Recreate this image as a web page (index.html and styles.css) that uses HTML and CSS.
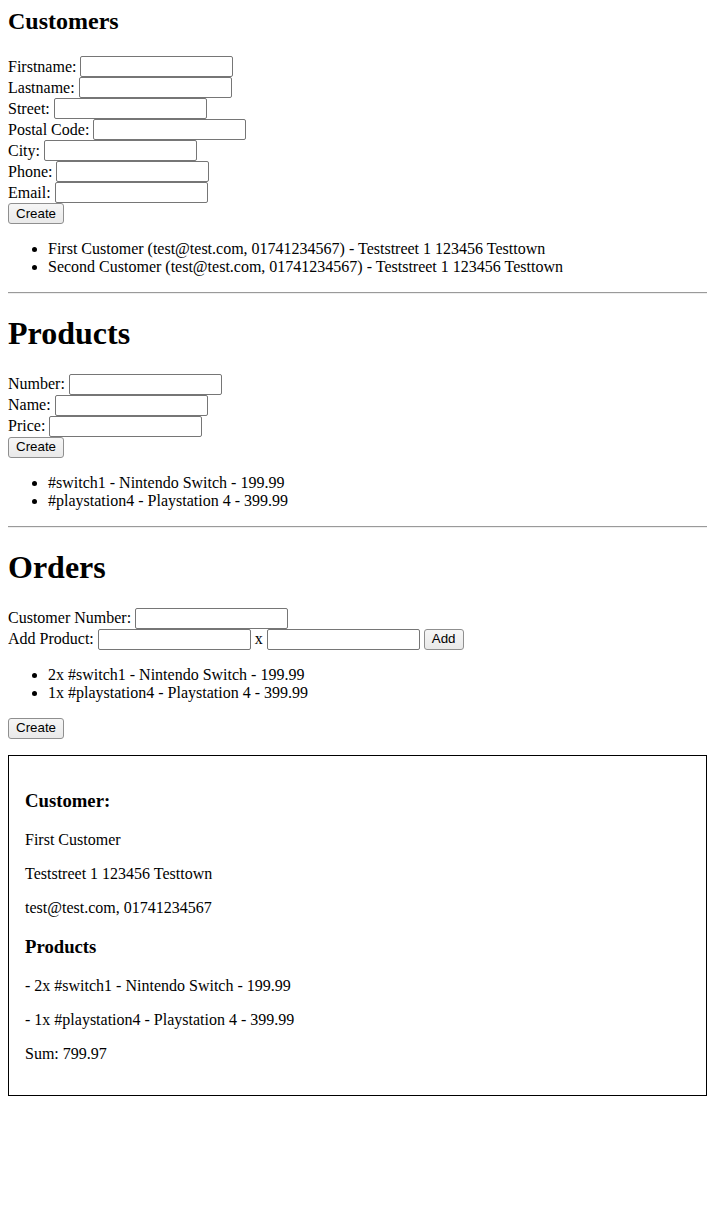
FILE: index.html
```html
<!DOCTYPE html>
<html>
<head>
<meta charset="utf-8">
<link rel="stylesheet" href="styles.css">
</head>
<body class="page">
  <section class="section">
    <h2 class="title-sm">Customers</h2>
    <form class="form">
      <div class="row"><span>Firstname:</span><input class="field" type="text"></div>
      <div class="row"><span>Lastname:</span><input class="field" type="text"></div>
      <div class="row"><span>Street:</span><input class="field" type="text"></div>
      <div class="row"><span>Postal Code:</span><input class="field" type="text"></div>
      <div class="row"><span>City:</span><input class="field" type="text"></div>
      <div class="row"><span>Phone:</span><input class="field" type="text"></div>
      <div class="row"><span>Email:</span><input class="field" type="text"></div>
      <div class="row"><button class="btn" type="button">Create</button></div>
    </form>
    <ul class="list">
      <li>First Customer (test@test.com, 01741234567) - Teststreet 1 123456 Testtown</li>
      <li>Second Customer (test@test.com, 01741234567) - Teststreet 1 123456 Testtown</li>
    </ul>
  </section>
  <hr class="divider">
  <section class="section">
    <h1 class="title">Products</h1>
    <form class="form">
      <div class="row"><span>Number:</span><input class="field" type="text"></div>
      <div class="row"><span>Name:</span><input class="field" type="text"></div>
      <div class="row"><span>Price:</span><input class="field" type="text"></div>
      <div class="row"><button class="btn" type="button">Create</button></div>
    </form>
    <ul class="list">
      <li>#switch1 - Nintendo Switch - 199.99</li>
      <li>#playstation4 - Playstation 4 - 399.99</li>
    </ul>
  </section>
  <hr class="divider">
  <section class="section">
    <h1 class="title">Orders</h1>
    <form class="form">
      <div class="row"><span>Customer Number:</span><input class="field" type="text"></div>
      <div class="row"><span>Add Product:</span><input class="field" type="text"><span>x</span><input class="field" type="text"><button class="btn" type="button">Add</button></div>
    </form>
    <ul class="list">
      <li>2x #switch1 - Nintendo Switch - 199.99</li>
      <li>1x #playstation4 - Playstation 4 - 399.99</li>
    </ul>
    <div class="row"><button class="btn" type="button">Create</button></div>
    <div class="summary">
      <h3 class="sub">Customer:</h3>
      <p class="line">First Customer</p>
      <p class="line">Teststreet 1 123456 Testtown</p>
      <p class="line">test@test.com, 01741234567</p>
      <h3 class="sub">Products</h3>
      <p class="line">- 2x #switch1 - Nintendo Switch - 199.99</p>
      <p class="line">- 1x #playstation4 - Playstation 4 - 399.99</p>
      <p class="line">Sum: 799.97</p>
    </div>
  </section>
</body>
</html>
```

FILE: styles.css
```css
html, body {
  background: #fff;
}
.page {
  margin: 8px;
  font-family: "Liberation Serif", "Times New Roman", serif;
  font-size: 16px;
  line-height: 18px;
  color: #000;
}
.section {
  display: block;
}
.title-sm {
  font-size: 24px;
  line-height: 27px;
  font-weight: bold;
  margin: 0 0 21px 0;
}
.title {
  font-size: 32px;
  line-height: 37px;
  font-weight: bold;
  margin: 21.44px 0;
}
.form {
  margin: 0;
  display: flex;
  flex-direction: column;
}
.row {
  display: flex;
  align-items: center;
  gap: 4px;
  height: 21px;
}
.field {
  box-sizing: border-box;
  width: 153px;
  height: 21px;
  margin: 0;
  padding: 1px 2px;
  border: 1px solid #767676;
  border-radius: 2px;
  background: #fff;
  font-family: "Liberation Sans", Arial, sans-serif;
  font-size: 13.33px;
}
.btn {
  box-sizing: border-box;
  height: 21px;
  margin: 0;
  padding: 0 7px;
  border: 1px solid #8f8f8f;
  border-radius: 3px;
  background: linear-gradient(#f6f6f6, #e9e9e9);
  font-family: "Liberation Sans", Arial, sans-serif;
  font-size: 13.33px;
  color: #000;
  line-height: 18px;
}
.list {
  margin: 16px 0;
  padding-left: 40px;
}
.divider {
  margin: 16px 0 0 0;
  border: 0;
  border-top: 1px solid #9a9a9a;
  border-bottom: 1px solid #eeeeee;
  height: 0;
}
.summary {
  margin-top: 16px;
  border: 1px solid #000;
  padding: 16px;
}
.sub {
  font-size: 18.72px;
  line-height: 22px;
  font-weight: bold;
  margin: 18.72px 0;
}
.line {
  margin: 16px 0;
}
```
